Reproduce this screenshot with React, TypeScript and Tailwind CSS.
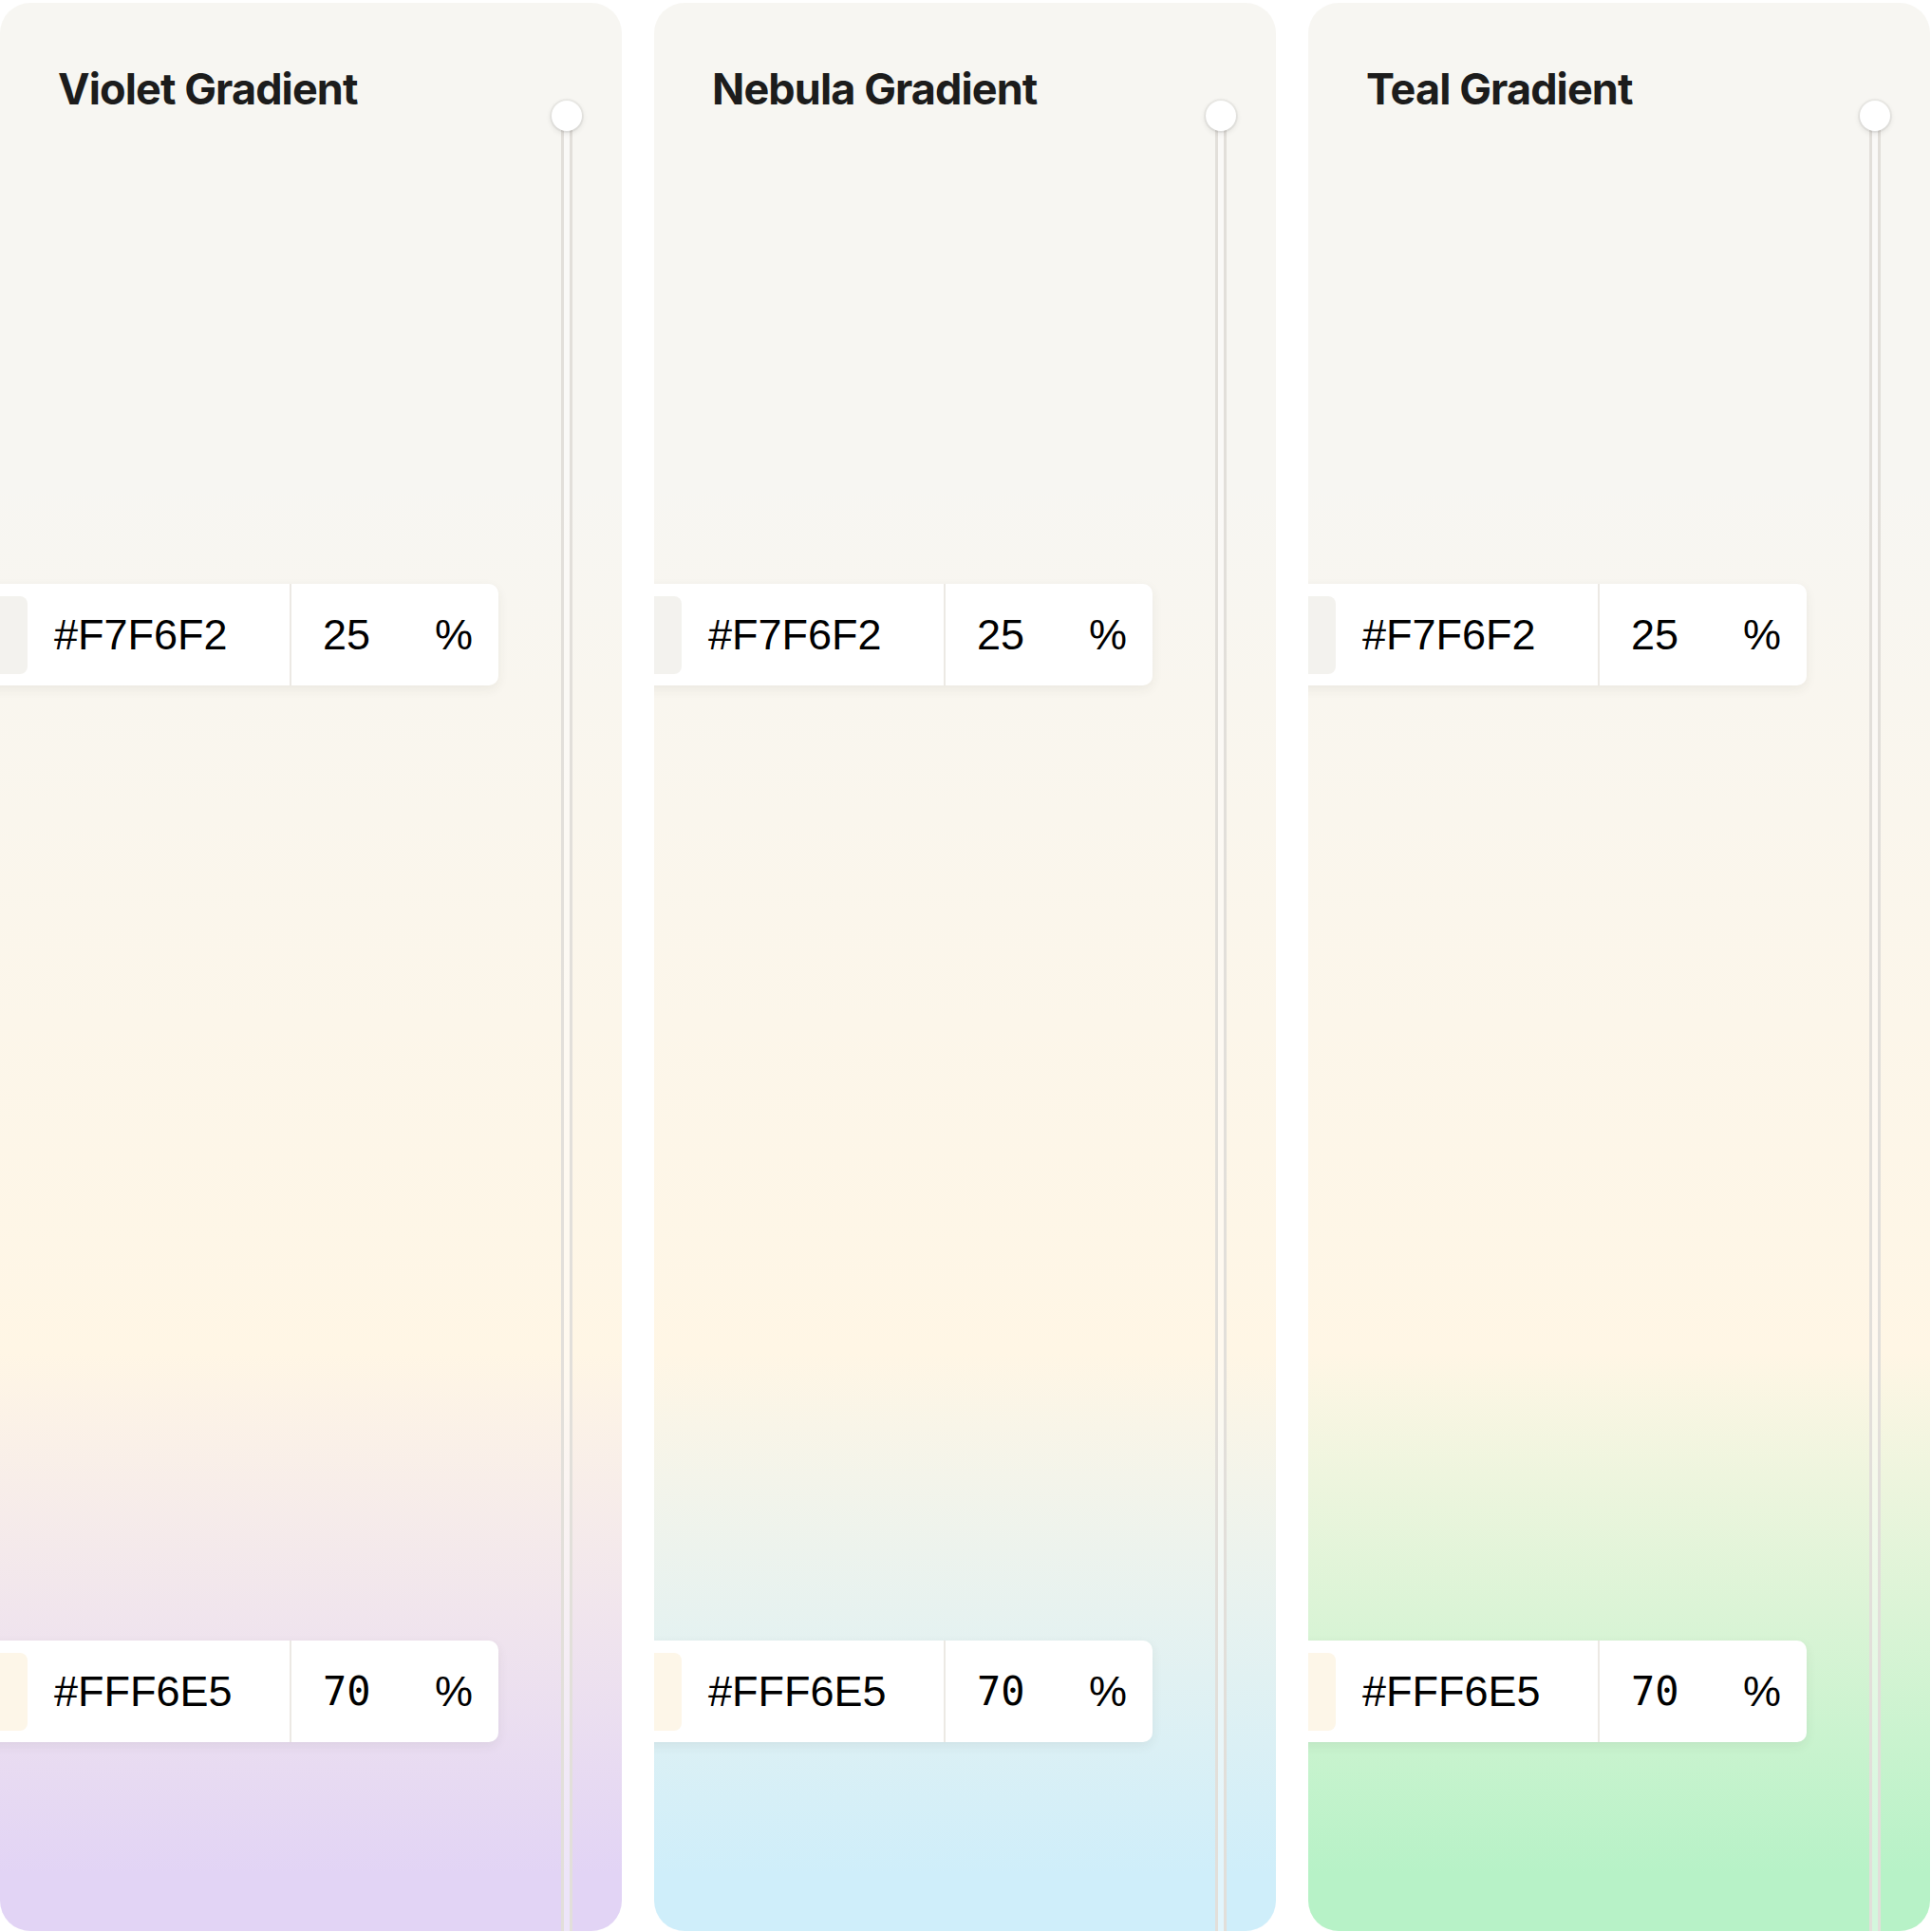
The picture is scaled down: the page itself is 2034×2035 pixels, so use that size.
import React from 'react';

type Stop = { hex: string; pct: string; swatch: string };

const panels = [
  { title: 'Violet Gradient', bg: 'bg-[linear-gradient(to_bottom,#F7F6F2_25%,#FFF6E5_70%,#E2D4F5_97%)]' },
  { title: 'Nebula Gradient', bg: 'bg-[linear-gradient(to_bottom,#F7F6F2_25%,#FFF6E5_70%,#CFEEFA_97%)]' },
  { title: 'Teal Gradient', bg: 'bg-[linear-gradient(to_bottom,#F7F6F2_25%,#FFF6E5_70%,#B7F2C7_97%)]' },
];

function StopRow({ stop, mono, className }: { stop: Stop; mono?: boolean; className: string }) {
  return (
    <div className={`flex h-[107px] w-[590px] ml-[-65px] items-center rounded-[10px] bg-white shadow-[0_4px_12px_rgba(60,50,40,0.07)] ${className}`}>
      <div className="flex w-[372px] items-center">
        <div className={`ml-3 h-[82px] w-[82px] rounded-[8px] ${stop.swatch}`} />
        <span className="ml-[28px] text-[45px] leading-none text-black [font-family:'Liberation_Sans',sans-serif]">{stop.hex}</span>
      </div>
      <div className="h-full w-[2px] bg-[#ece9e4]" />
      <div className="flex flex-1 items-center pl-[33px] pr-[27px] text-[45px] leading-none text-black [font-family:'Liberation_Sans',sans-serif]">
        <span className={mono ? 'w-[118px] text-[42px] [font-family:"DejaVu_Sans_Mono",monospace]' : 'w-[118px]'}>{stop.pct}</span>
        <span>%</span>
      </div>
    </div>
  );
}

export default function App() {
  return (
    <div className="flex w-[2034px] gap-[34px] bg-white pt-[3px]">
      {panels.map((p) => (
        <div key={p.title} className={`flex h-[2031px] w-[655px] shrink-0 overflow-hidden rounded-[32px] ${p.bg}`}>
          <div className="flex flex-1 flex-col">
            <h2 className="pl-[61px] pt-[68px] text-[45px] font-bold leading-none tracking-[-0.02em] text-[#1c1c1c] [font-family:Inter,sans-serif]">
              {p.title}
            </h2>
            <StopRow className="mt-[499px]" stop={{ hex: '#F7F6F2', pct: '25', swatch: 'bg-[#F3F2EE]' }} />
            <StopRow className="mt-[1006px]" stop={{ hex: '#FFF6E5', pct: '70', swatch: 'bg-[#FDF6E8]' }} mono />
          </div>
          <div className="mr-[52px] flex w-[12px] flex-col items-center pt-[103px]">
            <div className="relative z-10 h-8 w-8 shrink-0 rounded-full bg-white shadow-[0_0_0_2px_rgba(0,0,0,0.04),0_2px_6px_rgba(0,0,0,0.12)]" />
            <div className="-mt-4 w-[12px] flex-1 border-x-[3px] border-[#e2dfda] bg-white/40" />
          </div>
        </div>
      ))}
    </div>
  );
}
